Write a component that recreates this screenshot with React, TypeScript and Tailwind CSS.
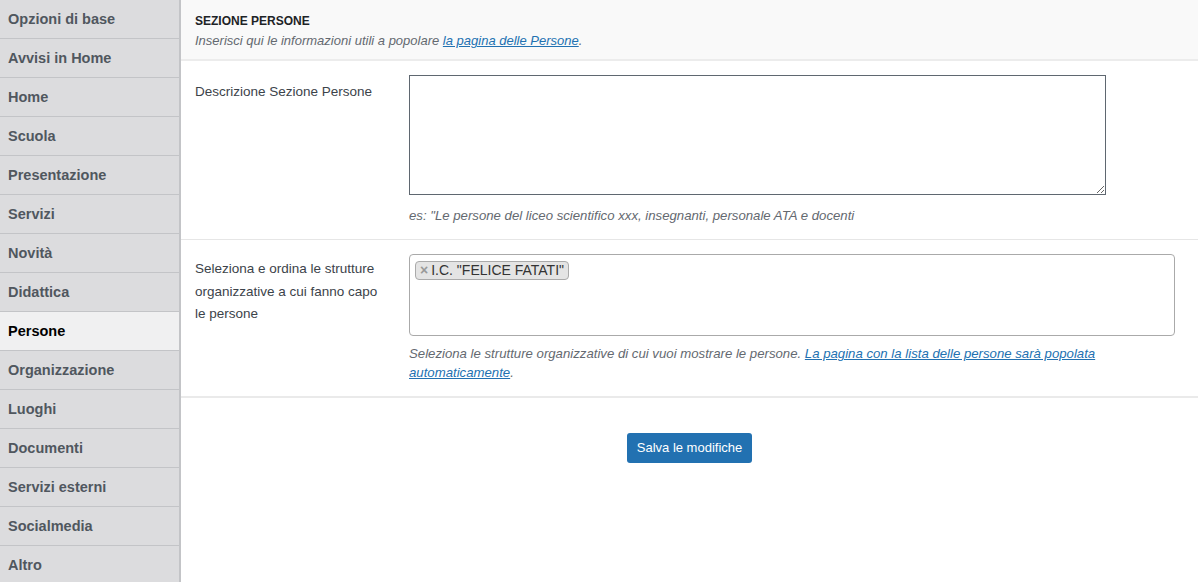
import React from "react";

const items = [
  "Opzioni di base",
  "Avvisi in Home",
  "Home",
  "Scuola",
  "Presentazione",
  "Servizi",
  "Novità",
  "Didattica",
  "Persone",
  "Organizzazione",
  "Luoghi",
  "Documenti",
  "Servizi esterni",
  "Socialmedia",
  "Altro",
];

export default function App() {
  return (
    <div
      className="flex w-[1198px] h-[582px] overflow-hidden bg-white"
      style={{ fontFamily: '"Liberation Sans", Arial, sans-serif' }}
    >
      <aside className="w-[181px] shrink-0 bg-[#dcdcde] border-r-2 border-[#c3c4c7] flex flex-col">
        {items.map((it) => (
          <div
            key={it}
            className={
              it === "Persone"
                ? "h-[39px] shrink-0 flex items-center pl-[8px] pt-[2px] border-b border-[#c3c4c7] bg-[#f0f0f1] text-black text-[14.5px] font-bold"
                : "h-[39px] shrink-0 flex items-center pl-[8px] pt-[2px] border-b border-[#c3c4c7] text-[#50575e] text-[14.5px] font-bold"
            }
          >
            {it}
          </div>
        ))}
      </aside>
      <main className="flex-1 flex flex-col">
        <div className="h-[61px] bg-[#f9f9f9] border-b-2 border-[#ececec] pl-[14px] pt-[12px]">
          <div className="text-[12px] font-bold text-[#1d2327] leading-[18px]">SEZIONE PERSONE</div>
          <div className="text-[13px] italic text-[#646970] leading-[20px] mt-[1px]">
            Inserisci qui le informazioni utili a popolare{" "}
            <a className="text-[#2271b1] underline">la pagina delle Persone</a>.
          </div>
        </div>
        <div className="flex border-b border-[#e6e6e6] pt-[14px] pb-[14px]">
          <div className="w-[228px] shrink-0 pl-[14px] pr-[20px] pt-[6px] text-[13.5px] leading-[22px] text-[#3c434a]">
            Descrizione Sezione Persone
          </div>
          <div className="flex-1 pr-[23px]">
            <textarea className="block w-[697px] h-[120px] border border-[#5f6770] bg-white resize-y outline-none" />
            <div className="mt-[11px] text-[13.2px] italic text-[#646970] leading-[19px]">
              es: "Le persone del liceo scientifico xxx, insegnanti, personale ATA e docenti
            </div>
          </div>
        </div>
        <div className="flex border-b-2 border-[#eaeaea] pt-[14px] pb-[14px]">
          <div className="w-[228px] shrink-0 pl-[14px] pr-[20px] pt-[4px] text-[13.5px] leading-[22.5px] text-[#3c434a]">
            Seleziona e ordina le strutture organizzative a cui fanno capo le persone
          </div>
          <div className="flex-1 pr-[23px]">
            <div className="h-[82px] flex items-start border border-[#aaaaaa] rounded-[4px] bg-white pl-[5px] pt-[6px]">
              <span className="inline-flex items-center h-[19px] px-[4px] bg-[#e4e4e4] border border-[#aaaaaa] rounded-[4px] text-[14px] leading-[17px] text-[#333333]">
                <span className="text-[#999999] font-bold text-[14px] mr-[3px]">×</span>
                I.C. "FELICE FATATI"
              </span>
            </div>
            <div className="mt-[8px] text-[13.2px] italic text-[#646970] leading-[19px]">
              Seleziona le strutture organizzative di cui vuoi mostrare le persone.{" "}
              <a className="text-[#2271b1] underline">La pagina con la lista delle persone sarà popolata automaticamente</a>.
            </div>
          </div>
        </div>
        <div className="flex justify-center pt-[35px]">
          <button className="h-[30px] w-[125px] bg-[#2271b1] text-white text-[13px] rounded-[3px]">
            Salva le modifiche
          </button>
        </div>
      </main>
    </div>
  );
}
